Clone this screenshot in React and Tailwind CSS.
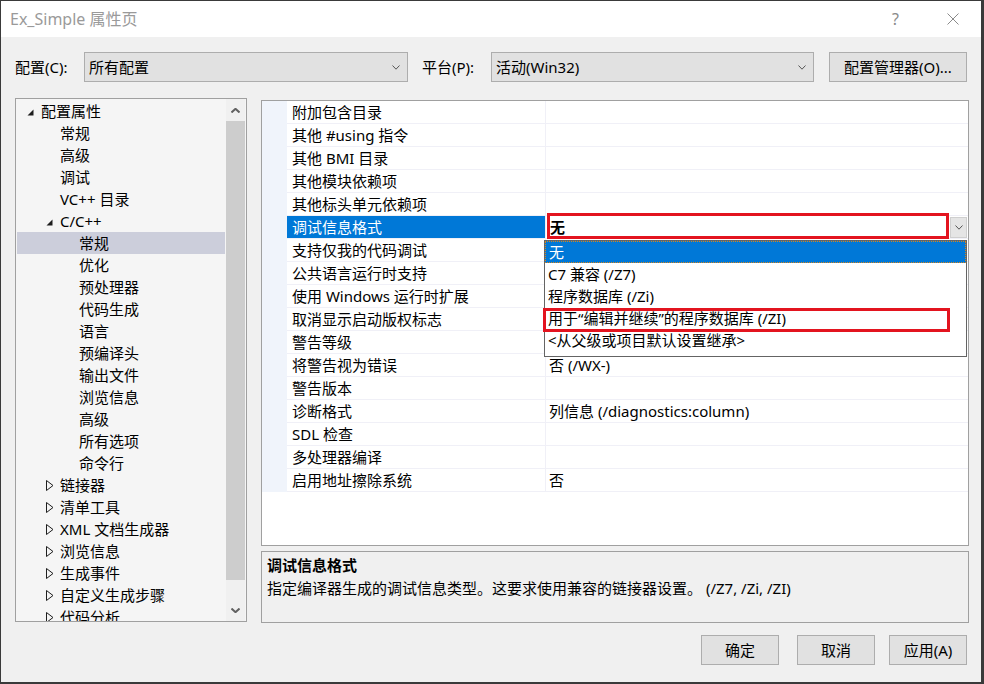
import React from 'react';

const treeItems = [
  { label: '配置属性', level: 0, toggle: 'open' },
  { label: '常规', level: 1 },
  { label: '高级', level: 1 },
  { label: '调试', level: 1 },
  { label: 'VC++ 目录', level: 1 },
  { label: 'C/C++', level: 1, toggle: 'open' },
  { label: '常规', level: 2, selected: true },
  { label: '优化', level: 2 },
  { label: '预处理器', level: 2 },
  { label: '代码生成', level: 2 },
  { label: '语言', level: 2 },
  { label: '预编译头', level: 2 },
  { label: '输出文件', level: 2 },
  { label: '浏览信息', level: 2 },
  { label: '高级', level: 2 },
  { label: '所有选项', level: 2 },
  { label: '命令行', level: 2 },
  { label: '链接器', level: 1, toggle: 'closed' },
  { label: '清单工具', level: 1, toggle: 'closed' },
  { label: 'XML 文档生成器', level: 1, toggle: 'closed' },
  { label: '浏览信息', level: 1, toggle: 'closed' },
  { label: '生成事件', level: 1, toggle: 'closed' },
  { label: '自定义生成步骤', level: 1, toggle: 'closed' },
  { label: '代码分析', level: 1, toggle: 'closed' },
];

const levelPad = { 0: 'pl-[10px]', 1: 'pl-[29px]', 2: 'pl-[48px]' };

const props = [
  { name: '附加包含目录', value: '' },
  { name: '其他 #using 指令', value: '' },
  { name: '其他 BMI 目录', value: '' },
  { name: '其他模块依赖项', value: '' },
  { name: '其他标头单元依赖项', value: '' },
  { name: '调试信息格式', value: '无', selected: true },
  { name: '支持仅我的代码调试', value: '' },
  { name: '公共语言运行时支持', value: '' },
  { name: '使用 Windows 运行时扩展', value: '' },
  { name: '取消显示启动版权标志', value: '' },
  { name: '警告等级', value: '' },
  { name: '将警告视为错误', value: '否 (/WX-)' },
  { name: '警告版本', value: '' },
  { name: '诊断格式', value: '列信息 (/diagnostics:column)' },
  { name: 'SDL 检查', value: '' },
  { name: '多处理器编译', value: '' },
  { name: '启用地址擦除系统', value: '否' },
];

const options = [
  '无',
  'C7 兼容 (/Z7)',
  '程序数据库 (/Zi)',
  '用于“编辑并继续”的程序数据库 (/ZI)',
  '<从父级或项目默认设置继承>',
];

const OpenArrow = () => (
  <svg width="7" height="7" viewBox="0 0 7 7" className="mt-[3px]">
    <path d="M6.5 0.5 V6.5 H0.5 Z" fill="#1e1e1e" />
  </svg>
);

const ClosedArrow = () => (
  <svg width="8" height="11" viewBox="0 0 8 11" className="mt-[1px]">
    <path d="M0.5 0.5 L7 5.5 L0.5 10.5 Z" fill="none" stroke="#1e1e1e" />
  </svg>
);

const Chevron = ({ up = false, w = 8, h = 5, color = '#555', sw = 1 }) => (
  <svg width={w} height={h} viewBox={`0 0 ${w} ${h}`}>
    {up ? (
      <path d={`M0.5 ${h - 0.5} L${w / 2} 0.8 L${w - 0.5} ${h - 0.5}`} fill="none" stroke={color} strokeWidth={sw} />
    ) : (
      <path d={`M0.5 0.5 L${w / 2} ${h - 0.8} L${w - 0.5} 0.5`} fill="none" stroke={color} strokeWidth={sw} />
    )}
  </svg>
);

const Combo = ({ text, width }) => (
  <div className={`${width} h-[30px] bg-[#e1e1e1] border border-[#adadad] flex items-center pl-[4px] pr-[7px]`}>
    <span className="flex-1">{text}</span>
    <Chevron />
  </div>
);

const App = () => {
  return (
    <div className="w-[984px] h-[684px] bg-[#f0f0f0] border-l border-t border-r-[3px] border-b-[2px] border-[#3a3a3a] flex flex-col overflow-hidden text-[15px] leading-none text-black font-['Noto_Sans','Noto_Sans_CJK_SC',sans-serif]">
      {/* title bar */}
      <div className="h-[36px] bg-white flex items-center pl-[9px] pr-[22px] text-[#9a9a9a]">
        <span className="text-[16px]">Ex_Simple 属性页</span>
        <div className="ml-auto flex items-center gap-[48px]">
          <span className="text-[16px] text-[#8a8a8a]">?</span>
          <svg width="12" height="12" viewBox="0 0 12 12">
            <path d="M0.5 0.5 L11.5 11.5 M11.5 0.5 L0.5 11.5" stroke="#8a8a8a" strokeWidth="1" />
          </svg>
        </div>
      </div>

      {/* configuration row */}
      <div className="mt-[15px] h-[30px] flex items-center pl-[14px]">
        <span className="w-[69px]">配置(C):</span>
        <Combo text="所有配置" width="w-[324px]" />
        <span className="ml-[14px] w-[69px]">平台(P):</span>
        <Combo text="活动(Win32)" width="w-[323px]" />
        <button className="ml-[15px] w-[138px] h-[30px] bg-[#e1e1e1] border border-[#adadad] flex items-center justify-center">
          配置管理器(O)...
        </button>
      </div>

      {/* main area */}
      <div className="mt-[16px] flex items-start pl-[14px]">
        {/* tree */}
        <div className="w-[232px] h-[524px] border border-[#a0a0a0] bg-[#f5f5f5] flex">
          <div className="flex-1 mx-[1px] pt-[1px] overflow-hidden">
            {treeItems.map((item, i) => (
              <div
                key={i}
                className={`h-[22px] flex items-center ${levelPad[item.level]} ${item.selected ? 'bg-[#cccedb]' : ''}`}
              >
                <span className="w-[14px] flex items-center">
                  {item.toggle === 'open' && <OpenArrow />}
                  {item.toggle === 'closed' && <ClosedArrow />}
                </span>
                <span className="whitespace-nowrap">{item.label}</span>
              </div>
            ))}
          </div>
          <div className="w-[19px] mr-[1px] bg-[#f0f0f0] flex flex-col">
            <div className="h-[22px] flex items-center justify-center">
              <Chevron up w={9} h={5} color="#606060" sw={2} />
            </div>
            <div className="h-[459px] bg-[#cdcdcd]" />
            <div className="flex-1" />
            <div className="h-[22px] flex items-center justify-center">
              <Chevron w={9} h={5} color="#606060" sw={2} />
            </div>
          </div>
        </div>

        {/* right column */}
        <div className="ml-[14px] mt-[2px] w-[708px] flex flex-col">
          <div className="relative h-[446px] border border-[#a0a0a0] bg-white">
            {props.map((p, i) => (
              <div key={i} className="h-[23px] flex">
                <div className="w-[25px] bg-[#f0f4fb]" />
                <div
                  className={`w-[259px] border-b border-r border-[#f0f0f7] flex items-center pl-[5px] whitespace-nowrap ${
                    p.selected ? 'bg-[#0078d7] text-white' : ''
                  }`}
                >
                  {p.name}
                </div>
                {p.selected ? (
                  <div className="flex-1 border-b border-[#f0f0f7] flex items-center">
                    <span className="flex-1 pl-[4px] font-bold">{p.value}</span>
                    <div className="w-[17px] h-[21px] mr-[1px] bg-[#e5e5e5] border border-[#cfcfcf] flex items-center justify-center">
                      <Chevron w={8} h={5} color="#555" />
                    </div>
                  </div>
                ) : (
                  <div className="flex-1 border-b border-[#f0f0f7] flex items-center pl-[3px] whitespace-nowrap">
                    {p.value}
                  </div>
                )}
              </div>
            ))}

            {/* dropdown list */}
            <div className="absolute left-[282px] top-[139px] w-[423px] h-[117px] bg-white border border-[#646464]">
              {options.map((o, i) => (
                <div
                  key={i}
                  className={`h-[22px] flex items-center pl-[3px] whitespace-nowrap ${
                    i === 0 ? 'bg-[#0078d7] text-white border border-dotted border-[#d8861c]' : ''
                  }`}
                >
                  {o}
                </div>
              ))}
            </div>

            {/* annotation boxes */}
            <div className="absolute left-[285px] top-[112px] w-[402px] h-[26px] border-[3px] border-[#e3141f] pointer-events-none" />
            <div className="absolute left-[281px] top-[207px] w-[407px] h-[24px] border-[3px] border-[#e3141f] pointer-events-none" />
          </div>

          {/* description */}
          <div className="mt-[5px] h-[72px] border border-[#a0a0a0] bg-[#f0f0f0] flex flex-col pl-[5px] pt-[2px]">
            <div className="h-[22px] flex items-center font-bold">调试信息格式</div>
            <div className="h-[24px] flex items-center whitespace-nowrap">
              指定编译器生成的调试信息类型。这要求使用兼容的链接器设置。 (/Z7, /Zi, /ZI)
            </div>
          </div>
        </div>
      </div>

      {/* bottom buttons */}
      <div className="mt-[12px] h-[30px] flex justify-end pr-[14px]">
        <button className="w-[78px] h-[30px] bg-[#e1e1e1] border border-[#adadad]">确定</button>
        <button className="ml-[18px] w-[78px] h-[30px] bg-[#e1e1e1] border border-[#adadad]">取消</button>
        <button className="ml-[14px] w-[78px] h-[30px] bg-[#e1e1e1] border border-[#adadad]">应用(A)</button>
      </div>
    </div>
  );
};

export default App;
